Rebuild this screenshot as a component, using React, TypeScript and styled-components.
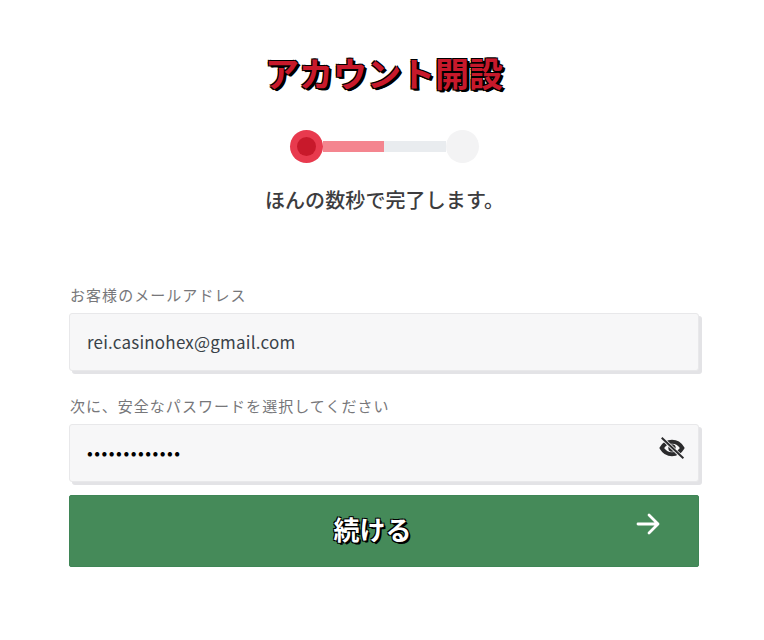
import React from "react";
import styled, { createGlobalStyle } from "styled-components";

const Global = createGlobalStyle`
  html, body { margin: 0; padding: 0; background: #fff; }
  body { font-family: "Noto Sans CJK JP", "Noto Sans", sans-serif; }
`;

const Page = styled.main`
  width: 764px;
  height: 640px;
  box-sizing: border-box;
  padding: 50px 65px 0 69px;
  display: flex;
  flex-direction: column;
`;

const Header = styled.header`
  display: flex;
  flex-direction: column;
  align-items: center;
`;

const Title = styled.h1`
  margin: 0;
  font-size: 34px;
  line-height: 46px;
  font-weight: 700;
  color: #c8192b;
  text-shadow: -1px -1px 0 #000, 1px -1px 0 #000, -1px 1px 0 #000, 1px 1px 0 #000, 2px 2px 0 #000, 3px 2px 0 #000;
`;

const Stepper = styled.div`
  margin-top: 34px;
  display: flex;
  align-items: center;
`;

const ActiveDot = styled.div`
  width: 33px;
  height: 33px;
  border-radius: 50%;
  background: #e83a4e;
  display: flex;
  align-items: center;
  justify-content: center;
  &::after {
    content: "";
    width: 19px;
    height: 19px;
    border-radius: 50%;
    background: #c8192b;
  }
`;

const IdleDot = styled.div`
  width: 33px;
  height: 33px;
  border-radius: 50%;
  background: #f3f3f4;
`;

const Track = styled.div`
  width: 123px;
  height: 11px;
  background: #e9ecef;
`;

const TrackFill = styled.div`
  height: 100%;
  background: #f4858f;
`;

const Subtitle = styled.p`
  margin: 23px 0 0;
  padding-left: 1px;
  font-size: 20px;
  line-height: 28px;
  font-weight: 500;
  letter-spacing: 0.1px;
  color: #3c3c3e;
`;

const Form = styled.form`
  margin-top: 71px;
  display: flex;
  flex-direction: column;
`;

const Field = styled.div`
  display: flex;
  flex-direction: column;
  margin-bottom: 25px;
  &:last-of-type { margin-bottom: 13px; }
`;

const Label = styled.label`
  font-size: 15px;
  line-height: 20px;
  padding-left: 1px;
  margin-bottom: 8px;
  color: #77777a;
  font-weight: 400;
  letter-spacing: 1.05px;
`;

const InputWrap = styled.div`
  position: relative;
  width: 630px;
`;

const Input = styled.input<{ $masked?: boolean }>`
  display: block;
  width: 100%;
  height: 58px;
  box-sizing: border-box;
  padding: 0 50px ${(p) => (p.$masked ? "3px" : "2px")} 17px;
  background: #f7f7f8;
  border: 1px solid #e8e8ea;
  border-radius: 3px;
  box-shadow: 3px 3px 0 #e3e3e6;
  outline: none;
  font-family: "Noto Sans CJK JP", "Noto Sans", sans-serif;
  font-size: 17px;
  font-weight: 400;
  letter-spacing: ${(p) => (p.$masked ? "1.5px" : "0.2px")};
  color: ${(p) => (p.$masked ? "#000" : "#3a4248")};
`;

const EyeButton = styled.span`
  position: absolute;
  right: 14px;
  top: 11px;
  width: 26px;
  height: 26px;
  color: #2b2b2d;
`;

const Submit = styled.button`
  position: relative;
  width: 630px;
  height: 72px;
  border: 1px solid #3f8556;
  border-radius: 2px;
  background: #458a59;
  color: #fff;
  font-family: inherit;
  font-size: 26px;
  font-weight: 700;
  display: flex;
  align-items: center;
  justify-content: center;
  padding: 0 23px 5px 0;
  text-shadow: -1px -1px 0 #000, 1px -1px 0 #000, -1px 1px 0 #000, 1px 1px 0 #000, 2px 2px 0 #000;
`;

const ArrowIcon = styled.span`
  position: absolute;
  right: 36px;
  top: 12px;
  width: 28px;
  height: 28px;
`;

export default function App() {
  return (
    <>
      <Global />
      <Page>
        <Header>
          <Title>アカウント開設</Title>
          <Stepper>
            <ActiveDot />
            <Track>
              <TrackFill style={{ width: "50%" }} />
            </Track>
            <IdleDot />
          </Stepper>
          <Subtitle>ほんの数秒で完了します。</Subtitle>
        </Header>
        <Form onSubmit={(e) => e.preventDefault()}>
          <Field>
            <Label>お客様のメールアドレス</Label>
            <InputWrap>
              <Input type="email" readOnly value="rei.casinohex@gmail.com" />
            </InputWrap>
          </Field>
          <Field>
            <Label>次に、安全なパスワードを選択してください</Label>
            <InputWrap>
              <Input $masked type="password" readOnly value="abcdefghijklm" />
              <EyeButton>
                <svg viewBox="0 0 24 24" width="26" height="26" fill="none">
                  <path d="M2.500 12c2.200-3.800 5.600-5.800 9.500-5.800s7.300 2 9.500 5.800c-2.200 3.800-5.600 5.800-9.500 5.800S4.700 15.800 2.500 12z" stroke="currentColor" strokeWidth="3.800" />
                  <circle cx="12" cy="12" r="3.400" fill="currentColor" />
                  <path d="M3.200 3.200 21.600 20.800" stroke="#f7f7f8" strokeWidth="3.400" />
                  <path d="M2.500 2.500 22.500 21.500" stroke="currentColor" strokeWidth="1.800" />
                </svg>
              </EyeButton>
            </InputWrap>
          </Field>
          <Submit type="submit">
            続ける
            <ArrowIcon>
              <svg viewBox="0 0 28 28" width="28" height="28" fill="none" stroke="#fff" strokeWidth="2.800" strokeLinecap="round" strokeLinejoin="round">
                <path d="M4 14h20M15 5l9 9-9 9" />
              </svg>
            </ArrowIcon>
          </Submit>
        </Form>
      </Page>
    </>
  );
}
